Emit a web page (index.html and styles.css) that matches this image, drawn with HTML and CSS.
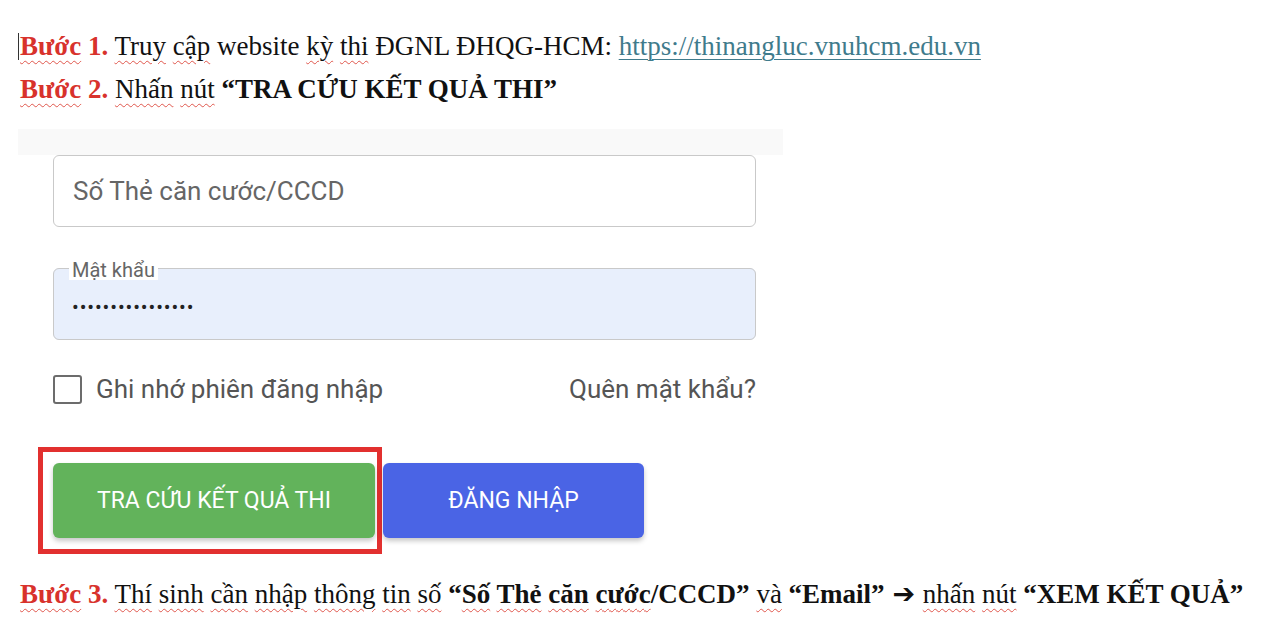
FILE: index.html
```html
<!DOCTYPE html>
<html lang="vi">
<head>
<meta charset="utf-8">
<title>Hướng dẫn tra cứu</title>
<link rel="stylesheet" href="styles.css">
</head>
<body>
<div class="doc">
  <p class="line"><span class="caret"></span><b class="step"><span class="sp">Bước</span> 1.</b> <span class="sp">Truy</span> <span class="sp">cập</span> website <span class="sp">kỳ</span> <span class="sp">thi</span> ĐGNL ĐHQG-HCM: <a class="link" href="#">https://thinangluc.vnuhcm.edu.vn</a></p>
  <p class="line"><b class="step"><span class="sp">Bước</span> 2.</b> <span class="sp">Nhấn</span> <span class="sp">nút</span> <b>“TRA CỨU KẾT QUẢ THI”</b></p>

  <div class="panel">
    <div class="band"></div>
    <div class="form">
      <div class="field">Số Thẻ căn cước/CCCD</div>
      <fieldset class="pw">
        <legend>Mật khẩu</legend>
        <div class="dots">••••••••••••••••</div>
      </fieldset>
      <div class="row">
        <label class="remember"><span class="box"></span>Ghi nhớ phiên đăng nhập</label>
        <span class="forgot">Quên mật khẩu?</span>
      </div>
      <div class="buttons">
        <div class="highlight"><div class="btn green">TRA CỨU KẾT QUẢ THI</div></div>
        <div class="btn blue">ĐĂNG NHẬP</div>
      </div>
    </div>
  </div>

  <p class="line l3"><b class="step"><span class="sp">Bước</span> 3.</b> <span class="sp">Thí</span> <span class="sp">sinh</span> <span class="sp">cần</span> <span class="sp">nhập</span> <span class="sp">thông</span> <span class="sp">tin</span> <span class="sp">số</span> <b>“<span class="sp">Số</span> <span class="sp">Thẻ</span> <span class="sp">căn</span> <span class="sp">cước</span>/CCCD”</b> <span class="sp">và</span> <b>“Email”</b> <span class="arrow">➔</span> <span class="sp">nhấn</span> <span class="sp">nút</span> <b>“XEM KẾT QUẢ”</b></p>
</div>
</body>
</html>
```
FILE: styles.css
```css
html, body {
  margin: 0;
  padding: 0;
  background: #ffffff;
}
.doc {
  padding-top: 25px;
  font-family: "Liberation Serif", "Times New Roman", serif;
  color: #111;
}
.line {
  margin: 0;
  padding-left: 20px;
  font-size: 27px;
  line-height: 43px;
  white-space: nowrap;
}
.caret {
  display: inline-block;
  width: 1px;
  height: 27px;
  background: #333;
  vertical-align: -5px;
  margin-left: -2px;
  margin-right: 1px;
}
.step {
  color: #d8322c;
}
.sp {
  text-decoration: underline wavy #e0574d;
  text-decoration-thickness: 1px;
  text-underline-offset: 5px;
}
.link {
  color: #3f7b8c;
  text-decoration: underline;
  text-decoration-thickness: 1px;
  text-underline-offset: 4px;
}
.arrow {
  font-family: "DejaVu Sans", sans-serif;
  font-weight: bold;
  font-size: 27px;
  color: #111;
  margin: 0 1px 0 1px;
}
.panel {
  margin: 18px 0 0 18px;
  width: 765px;
}
.band {
  height: 26px;
  background: #f9f9f9;
}
.form {
  padding: 0 27px 0 35px;
  font-family: Roboto, "Noto Sans", sans-serif;
}
.field {
  box-sizing: border-box;
  height: 72px;
  border: 1.5px solid #c9c9c9;
  border-radius: 6px;
  padding-left: 19px;
  display: flex;
  align-items: center;
  font-size: 26px;
  color: #666;
}
.pw {
  box-sizing: border-box;
  margin: 31px 0 0 0;
  height: 82px;
  border: 1.5px solid #c9c9c9;
  border-radius: 6px;
  background: #e8effc;
  padding: 0 18px;
}
.pw legend {
  font-size: 20px;
  color: #666;
  padding: 0 3px;
  margin-left: -3px;
  line-height: 20px;
  background: #fff;
  position: relative;
  top: 2px;
}
.dots {
  font-size: 20px;
  letter-spacing: 0.9px;
  color: #222;
  line-height: 20px;
  margin-top: 19px;
}
.row {
  margin-top: 34px;
  display: flex;
  justify-content: space-between;
  align-items: center;
  font-size: 26px;
  color: #555;
}
.remember {
  display: flex;
  align-items: center;
}
.box {
  box-sizing: border-box;
  width: 29px;
  height: 29px;
  border: 2.5px solid #6c6c6c;
  border-radius: 3px;
  margin-right: 14px;
}
.buttons {
  margin-top: 43px;
  display: flex;
  align-items: center;
}
.highlight {
  margin-left: -15px;
  border: 5px solid #e2302f;
  padding: 11px 2px 11px 10px;
}
.btn {
  height: 75px;
  border-radius: 6px;
  display: flex;
  align-items: center;
  justify-content: center;
  color: #fff;
  font-size: 23px;
  box-shadow: 0 3px 5px rgba(0,0,0,0.22);
}
.green {
  width: 322px;
  background: #62b35b;
}
.blue {
  width: 261px;
  margin-left: 1px;
  background: #4a64e5;
}
.l3 {
  margin-top: 18px;
}
```
